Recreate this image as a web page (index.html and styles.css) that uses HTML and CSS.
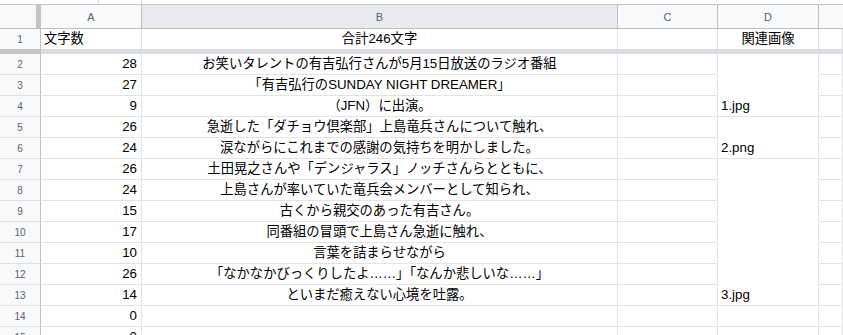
FILE: index.html
```html
<!DOCTYPE html>
<html lang="ja">
<head>
  <meta charset="UTF-8">
  <title>文字数シート</title>
  <link rel="stylesheet" href="styles.css">
</head>
<body>
  <!-- toolbar edge -->
  <div class="top-strip"><div class="top-tab"></div></div>

  <div class="sheet">
    <!-- column headers -->
    <div class="corner"></div>
    <div class="col-head">A</div>
    <div class="col-head selected">B</div>
    <div class="col-head">C</div>
    <div class="col-head">D</div>
    <div class="col-head last"></div>

    <!-- frozen row 1 -->
    <div class="row-head frozen">1</div>
    <div class="cell frozen left">文字数</div>
    <div class="cell frozen center">合計246文字</div>
    <div class="cell frozen"></div>
    <div class="cell frozen center">関連画像</div>
    <div class="cell frozen"></div>

    <div class="freeze-bar-head"></div>
    <div class="freeze-bar"></div>

    <div class="row-head">2</div>
    <div class="cell num">28</div>
    <div class="cell center">お笑いタレントの有吉弘行さんが5月15日放送のラジオ番組</div>
    <div class="cell"></div>
    <div class="cell left span3">1.jpg</div>
    <div class="cell"></div>

    <div class="row-head">3</div>
    <div class="cell num">27</div>
    <div class="cell center">「有吉弘行のSUNDAY NIGHT DREAMER」</div>
    <div class="cell"></div>
    <div class="cell"></div>

    <div class="row-head">4</div>
    <div class="cell num">9</div>
    <div class="cell center">（JFN）に出演。</div>
    <div class="cell"></div>
    <div class="cell"></div>

    <div class="row-head">5</div>
    <div class="cell num">26</div>
    <div class="cell center">急逝した「ダチョウ倶楽部」上島竜兵さんについて触れ、</div>
    <div class="cell"></div>
    <div class="cell left span2">2.png</div>
    <div class="cell"></div>

    <div class="row-head">6</div>
    <div class="cell num">24</div>
    <div class="cell center">涙ながらにこれまでの感謝の気持ちを明かしました。</div>
    <div class="cell"></div>
    <div class="cell"></div>

    <div class="row-head">7</div>
    <div class="cell num">26</div>
    <div class="cell center">土田晃之さんや「デンジャラス」ノッチさんらとともに、</div>
    <div class="cell"></div>
    <div class="cell left span7">3.jpg</div>
    <div class="cell"></div>

    <div class="row-head">8</div>
    <div class="cell num">24</div>
    <div class="cell center">上島さんが率いていた竜兵会メンバーとして知られ、</div>
    <div class="cell"></div>
    <div class="cell"></div>

    <div class="row-head">9</div>
    <div class="cell num">15</div>
    <div class="cell center">古くから親交のあった有吉さん。</div>
    <div class="cell"></div>
    <div class="cell"></div>

    <div class="row-head">10</div>
    <div class="cell num">17</div>
    <div class="cell center">同番組の冒頭で上島さん急逝に触れ、</div>
    <div class="cell"></div>
    <div class="cell"></div>

    <div class="row-head">11</div>
    <div class="cell num">10</div>
    <div class="cell center">言葉を詰まらせながら</div>
    <div class="cell"></div>
    <div class="cell"></div>

    <div class="row-head">12</div>
    <div class="cell num">26</div>
    <div class="cell center">「なかなかびっくりしたよ……」「なんか悲しいな……」</div>
    <div class="cell"></div>
    <div class="cell"></div>

    <div class="row-head">13</div>
    <div class="cell num">14</div>
    <div class="cell center">といまだ癒えない心境を吐露。</div>
    <div class="cell"></div>
    <div class="cell"></div>

    <div class="row-head">14</div>
    <div class="cell num">0</div>
    <div class="cell"></div>
    <div class="cell"></div>
    <div class="cell"></div>
    <div class="cell"></div>

    <div class="row-head">15</div>
    <div class="cell num">0</div>
    <div class="cell"></div>
    <div class="cell"></div>
    <div class="cell"></div>
    <div class="cell"></div>
  </div>
</body>
</html>
```

FILE: styles.css
```css
html, body {
  margin: 0;
  padding: 0;
  background: #fff;
  overflow: hidden;
  height: 335px;
}

body {
  font-family: "Liberation Sans", "Noto Sans CJK JP", sans-serif;
  color: #000;
}

/* Toolbar edge */
.top-strip {
  height: 5px;
  box-sizing: border-box;
  border-bottom: 1px solid #c4c7c5;
}

.top-tab {
  margin-left: 98px;
  width: 44px;
  height: 4px;
  box-sizing: border-box;
  border-left: 1px solid #dadce0;
  border-right: 1px solid #dadce0;
}

/* Grid */
.sheet {
  display: grid;
  grid-template-columns: 41px 101px 476px 100px 101px 1fr;
  grid-template-rows: 24px 20px 5px;
  grid-auto-rows: 21px;
}

.corner {
  background: #f8f9fa;
  box-sizing: border-box;
  border-right: 5px solid #c4c4c4;
  border-bottom: 1px solid #c0c0c0;
}

.col-head {
  background: #f8f9fa;
  box-sizing: border-box;
  border-right: 1px solid #c0c0c0;
  border-bottom: 1px solid #c0c0c0;
  display: flex;
  align-items: center;
  justify-content: center;
  font-size: 11px;
  color: #5f6368;
}

.col-head.selected {
  background: #e8eaed;
}

.col-head.last {
  border-right: none;
}

.row-head {
  background: #f8f9fa;
  box-sizing: border-box;
  border-right: 1px solid #c0c0c0;
  border-bottom: 1px solid #e0e0e0;
  display: flex;
  align-items: center;
  justify-content: center;
  font-size: 10px;
  color: #5f6368;
}

.cell {
  box-sizing: border-box;
  border-right: 1px solid #e2e3e3;
  border-bottom: 1px solid #e2e3e3;
  display: flex;
  align-items: flex-end;
  padding: 0 3px 2px;
  font-size: 13.3px;
  line-height: 16px;
  white-space: nowrap;
  overflow: visible;
}

.frozen {
  border-bottom: none;
}

.cell.num {
  justify-content: flex-end;
  padding-right: 4px;
}

.cell.center {
  justify-content: center;
}

.cell.left {
  justify-content: flex-start;
}

.span2 { grid-row: span 2; }
.span3 { grid-row: span 3; }
.span7 { grid-row: span 7; }

/* Freeze line under row 1 */
.freeze-bar-head {
  background: #c4c4c4;
}

.freeze-bar {
  grid-column: span 5;
  background: #dadce0;
}
```
